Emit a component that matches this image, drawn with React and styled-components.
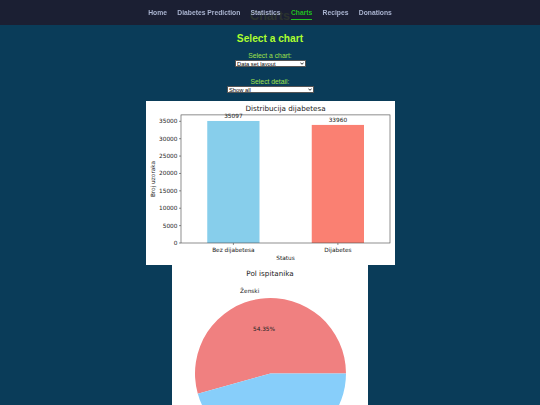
import React from 'react'
import styled, { createGlobalStyle } from 'styled-components'

const GlobalStyle = createGlobalStyle`
  html, body {
    margin: 0;
    padding: 0;
    background: #0a3c59;
    font-family: 'Liberation Sans', Arial, sans-serif;
  }
`;

const Nav = styled.nav`
    position: fixed;
    top: 0;
    left: 0;
    right: 0;
    height: 25px;
    background: rgba(29, 28, 47, 0.9);
    display: flex;
    justify-content: center;
    align-items: flex-start;
    gap: 10.3px;
    padding-top: 8.8px;
    box-sizing: border-box;
    z-index: 10;
`;

const NavLink = styled.a`
    font-size: 6.75px;
    font-weight: 700;
    line-height: 8px;
    padding-bottom: 2px;
    text-decoration: none;
    color: ${({ $active }) => ($active ? '#22c322' : '#aab4d0')};
    border-bottom: 1px solid ${({ $active }) => ($active ? '#22c322' : 'transparent')};
`;

const Page = styled.main`
    display: flex;
    flex-direction: column;
    align-items: center;
`;

const PageTitle = styled.h1`
    margin: 9px 0 0;
    font-size: 12.6px;
    line-height: 15px;
    font-weight: 700;
    color: #adff2f;
`;

const Heading = styled.h2`
    margin: 8.6px 0 0;
    font-size: 10.2px;
    line-height: 12px;
    font-weight: 700;
    color: #adff2f;
`;

const Field = styled.div`
    display: flex;
    flex-direction: column;
    align-items: center;
    margin-top: ${({ $top }) => $top}px;
`;

const Label = styled.label`
    font-size: 6.8px;
    line-height: 8px;
    color: #9fe04a;
`;

const SelectWrap = styled.div`
    position: relative;
    width: ${({ $width }) => $width}px;
    height: 7px;
`;

const Select = styled.select`
    appearance: none;
    display: block;
    width: 100%;
    height: 7px;
    margin: 0;
    padding: 0 0 0 1.5px;
    box-sizing: border-box;
    border: 0.6px solid #555;
    border-radius: 0;
    background: #fff;
    color: #000;
    font-family: 'Liberation Sans', Arial, sans-serif;
    font-size: 5.8px;
    line-height: 6px;
    outline: none;
`;

const Chevron = styled.svg`
    position: absolute;
    right: 2px;
    top: 2px;
    width: 4px;
    height: 3px;
    pointer-events: none;
`;

const Charts = styled.div`
    display: flex;
    flex-direction: column;
    align-items: center;
    margin-top: 8.2px;
`;

const ChartImage = styled.svg`
    display: block;
    background: #fff;
    font-family: 'DejaVu Sans', sans-serif;
`;

const links = ['Home', 'Diabetes Prediction', 'Statistics', 'Charts', 'Recipes', 'Donations'];

const Dropdown = ({ width, value }) => (
    <SelectWrap $width={width}>
        <Select defaultValue={value}>
            <option>{value}</option>
        </Select>
        <Chevron viewBox="0 0 4 3">
            <path d="M0.4 0.6 L2 2.3 L3.6 0.6" fill="none" stroke="#000" strokeWidth="0.8" />
        </Chevron>
    </SelectWrap>
);

const yTicks = [0, 5000, 10000, 15000, 20000, 25000, 30000, 35000];
const yOf = (v) => 142 - v * 0.003477;

const BarChart = () => (
    <ChartImage width="249" height="164" viewBox="0 0 249 164">
        <text x="139.5" y="10.3" fontSize="7.2" textAnchor="middle" fill="#222">Distribucija dijabetesa</text>
        <rect x="61.25" y={yOf(35097)} width="52.25" height={142 - yOf(35097)} fill="#87ceeb" />
        <rect x="165.75" y={yOf(33960)} width="52.25" height={142 - yOf(33960)} fill="#fa8072" />
        <rect x="35" y="13.9" width="209" height="128.1" fill="none" stroke="#444" strokeWidth="0.6" />
        {yTicks.map((t) => (
            <g key={t}>
                <line x1="33" x2="35" y1={yOf(t)} y2={yOf(t)} stroke="#444" strokeWidth="0.6" />
                <text x="31.5" y={yOf(t) + 2} fontSize="5.8" textAnchor="end" fill="#222">{t}</text>
            </g>
        ))}
        <line x1="87.4" x2="87.4" y1="142" y2="144" stroke="#444" strokeWidth="0.6" />
        <line x1="191.9" x2="191.9" y1="142" y2="144" stroke="#444" strokeWidth="0.6" />
        <text x="87.4" y="16.6" fontSize="5.8" textAnchor="middle" fill="#222">35097</text>
        <text x="191.9" y="20.5" fontSize="5.8" textAnchor="middle" fill="#222">33960</text>
        <text x="87.4" y="151" fontSize="5.8" textAnchor="middle" fill="#222">Bez dijabetesa</text>
        <text x="191.9" y="151" fontSize="5.8" textAnchor="middle" fill="#222">Dijabetes</text>
        <text x="139.5" y="159.3" fontSize="5.8" textAnchor="middle" fill="#222">Status</text>
        <text x="8.6" y="78" fontSize="5.8" textAnchor="middle" fill="#222" transform="rotate(-90 8.6 78)">Broj uzoraka</text>
    </ChartImage>
);

const PieChart = () => (
    <ChartImage width="196" height="250" viewBox="0 0 196 250">
        <text x="98" y="10.8" fontSize="7.2" textAnchor="middle" fill="#222">Pol ispitanika</text>
        <path d="M98.5 108.5 L174 108.5 A75.5 75.5 0 1 0 25.8 128.87 Z" fill="#f08080" />
        <path d="M98.5 108.5 L25.8 128.87 A75.5 75.5 0 0 0 174 108.5 Z" fill="#87cefa" />
        <text x="87.3" y="28.2" fontSize="5.8" textAnchor="end" fill="#222">Ženski</text>
        <text x="92" y="66" fontSize="5.8" textAnchor="middle" fill="#222">54.35%</text>
    </ChartImage>
);

const App = () => {
    return (
        <>
            <GlobalStyle />
            <Nav>
                {links.map((l) => (
                    <NavLink key={l} href="#" $active={l === 'Charts'}>{l}</NavLink>
                ))}
            </Nav>
            <Page>
                <PageTitle>Charts</PageTitle>
                <Heading>Select a chart</Heading>
                <Field $top={7.9}>
                    <Label>Select a chart:</Label>
                    <Dropdown width={71} value="Data set layout" />
                </Field>
                <Field $top={10.3}>
                    <Label>Select detail:</Label>
                    <Dropdown width={87} value="Show all" />
                </Field>
                <Charts>
                    <BarChart />
                    <PieChart />
                </Charts>
            </Page>
        </>
    )
}

export default App
